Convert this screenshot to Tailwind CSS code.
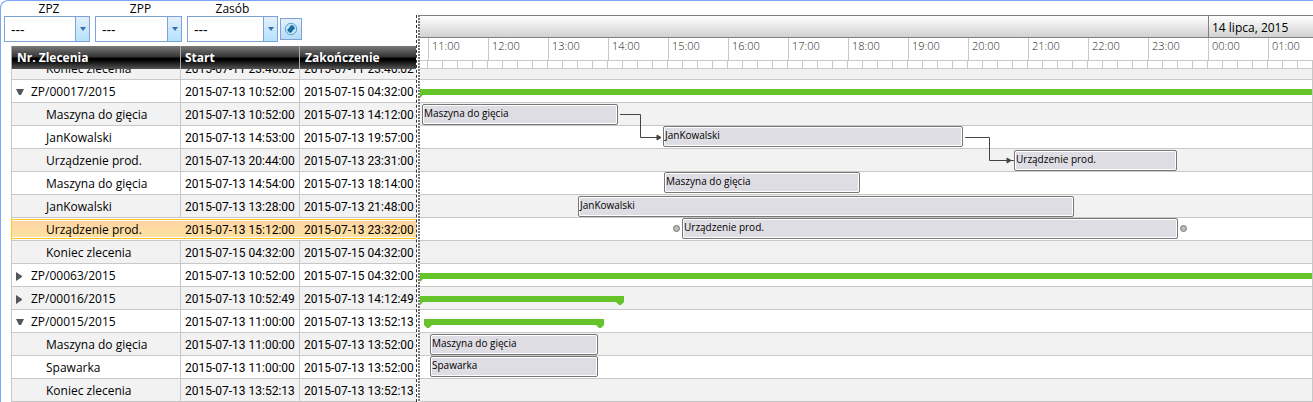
<!DOCTYPE html>
<html lang="pl">

<head>
  <meta charset="UTF-8" />
  <meta name="viewport" content="width=device-width, initial-scale=1" />
  <title>Harmonogram zleceń</title>
  <script src="https://cdn.jsdelivr.net/npm/@tailwindcss/browser@4"></script>
</head>

<body class="bg-white font-['Open_Sans',sans-serif] text-xs text-black">

  <main class="min-h-screen overflow-hidden rounded-tl-lg border-t border-l border-[#78a5f5] flex">

    <!-- Filters and order list -->
    <section class="w-[415px] shrink-0">
      <form class="flex h-[45px] pl-[3px] gap-[5px]">
        <div class="w-[86px]">
          <label for="zpz" class="block h-[15px] leading-4 text-center pl-1">ZPZ</label>
          <div class="relative">
            <select id="zpz" class="block w-full h-[26px] appearance-none border border-[#7da2d6] bg-white pl-1.5 pt-0.5 text-sm leading-5 outline-none">
              <option>---</option>
            </select>
            <span class="pointer-events-none absolute inset-y-px right-px w-3.5 border-l border-[#7da2d6] bg-linear-to-b from-[#e3effc] to-[#b5e2fb] flex items-center justify-center">
              <svg width="6" height="4" viewBox="0 0 6 4"><path d="M0 0h6L3 4z" fill="#3c6ca8" /></svg>
            </span>
          </div>
        </div>
        <div class="w-[87px]">
          <label for="zpp" class="block h-[15px] leading-4 text-center pl-1">ZPP</label>
          <div class="relative">
            <select id="zpp" class="block w-full h-[26px] appearance-none border border-[#7da2d6] bg-white pl-1.5 pt-0.5 text-sm leading-5 outline-none">
              <option>---</option>
            </select>
            <span class="pointer-events-none absolute inset-y-px right-px w-3.5 border-l border-[#7da2d6] bg-linear-to-b from-[#e3effc] to-[#b5e2fb] flex items-center justify-center">
              <svg width="6" height="4" viewBox="0 0 6 4"><path d="M0 0h6L3 4z" fill="#3c6ca8" /></svg>
            </span>
          </div>
        </div>
        <div class="w-[91px]">
          <label for="zasob" class="block h-[15px] leading-4 text-center">Zasób</label>
          <div class="relative">
            <select id="zasob" class="block w-full h-[26px] appearance-none border border-[#7da2d6] bg-white pl-1.5 pt-0.5 text-sm leading-5 outline-none">
              <option>---</option>
            </select>
            <span class="pointer-events-none absolute inset-y-px right-px w-3.5 border-l border-[#7da2d6] bg-linear-to-b from-[#e3effc] to-[#b5e2fb] flex items-center justify-center">
              <svg width="6" height="4" viewBox="0 0 6 4"><path d="M0 0h6L3 4z" fill="#3c6ca8" /></svg>
            </span>
          </div>
        </div>
        <button type="button" aria-label="Wyczyść filtry" class="-ml-[3px] mt-[17px] size-[22px] border border-[#7da2d6] bg-linear-to-b from-[#e3effc] to-[#b5dcfb] flex items-center justify-center">
          <svg width="14" height="14" viewBox="0 0 14 14">
            <circle cx="7" cy="7" r="5.7" fill="#c5e4f5" stroke="#5ba3cf" />
            <path d="M3 8 5.500 5.500 6 4 8 3 10 4.500 11 6.500 9 8 8 10 6 11z" fill="#1b6c9f" />
          </svg>
        </button>
      </form>

      <div class="pl-2.5">
        <table class="w-full table-fixed border-separate border-spacing-0">
          <colgroup>
            <col class="w-[170px]" />
            <col class="w-[119px]" />
            <col />
          </colgroup>
          <thead>
            <tr class="h-[23px] text-left text-white">
              <th class="border-x border-[#aaa] bg-[linear-gradient(#7a7a7a,#333_48%,#000_52%,#000_60%,#555)] p-0 pt-px pl-[5px] leading-4">Nr. Zlecenia</th>
              <th class="border-r border-[#aaa] bg-[linear-gradient(#7a7a7a,#333_48%,#000_52%,#000_60%,#555)] p-0 pt-px pl-1 leading-4">Start</th>
              <th class="bg-[linear-gradient(#7a7a7a,#333_48%,#000_52%,#000_60%,#555)] p-0 pt-px pl-[5px] leading-4">Zakończenie</th>
            </tr>
          </thead>
          <tbody id="orders"></tbody>
        </table>
      </div>
    </section>

    <!-- Splitter -->
    <div class="mt-3.5 w-1 shrink-0 border-l border-dashed border-[#333] flex justify-end">
      <div class="w-0.5 bg-[repeating-linear-gradient(#777_0_2px,#fff_2px_3px)]"></div>
    </div>

    <!-- Time chart -->
    <section class="mt-3.5 min-w-0 flex-1 overflow-hidden">
      <div class="flex h-[23px] border-y border-[#808080] bg-linear-to-b from-white to-[#d2d2d2]">
        <div class="w-[788px] shrink-0"></div>
        <div class="flex-1 border-l border-[#808080] pl-[3px] leading-6 whitespace-nowrap">14 lipca, 2015</div>
      </div>
      <div id="hours" class="flex h-[23px] overflow-hidden border-b border-[#c8c8c8] pl-2"></div>
      <div id="ticks" class="flex h-2 overflow-hidden border-r border-b border-[#c8c8c8] pl-[7px]"></div>
      <div class="relative border-r border-[#c8c8c8]">
        <div id="chart"></div>
        <svg class="pointer-events-none absolute top-0 left-0" width="620" height="110" fill="none" stroke="#444">
          <path d="M200 45.5h20.5v23H240" />
          <path d="M237 66l4 2.5-4 2.5z" fill="#444" />
          <path d="M545 68.5h24.5v23H594" />
          <path d="M587 89l4 2.5-4 2.5z" fill="#444" />
        </svg>
      </div>
    </section>
  </main>

  <script>
    // bar: task [left, width], sum: summary line [left, width]
    const rows = [
      { name: 'Koniec zlecenia', start: '2015-07-11 23:46:02', end: '2015-07-11 23:46:02', cut: true },
      { name: 'ZP/00017/2015', start: '2015-07-13 10:52:00', end: '2015-07-15 04:32:00', arrow: 'open', sum: [-5, 1000] },
      { name: 'Maszyna do gięcia', start: '2015-07-13 10:52:00', end: '2015-07-13 14:12:00', bar: [2, 196] },
      { name: 'JanKowalski', start: '2015-07-13 14:53:00', end: '2015-07-13 19:57:00', bar: [243, 300] },
      { name: 'Urządzenie prod.', start: '2015-07-13 20:44:00', end: '2015-07-13 23:31:00', bar: [594, 163] },
      { name: 'Maszyna do gięcia', start: '2015-07-13 14:54:00', end: '2015-07-13 18:14:00', bar: [244, 196] },
      { name: 'JanKowalski', start: '2015-07-13 13:28:00', end: '2015-07-13 21:48:00', bar: [158, 496] },
      { name: 'Urządzenie prod.', start: '2015-07-13 15:12:00', end: '2015-07-13 23:32:00', bar: [262, 496], selected: true },
      { name: 'Koniec zlecenia', start: '2015-07-15 04:32:00', end: '2015-07-15 04:32:00' },
      { name: 'ZP/00063/2015', start: '2015-07-13 10:52:00', end: '2015-07-15 04:32:00', arrow: 'closed', sum: [-5, 1000] },
      { name: 'ZP/00016/2015', start: '2015-07-13 10:52:49', end: '2015-07-13 14:12:49', arrow: 'closed', sum: [-5, 209] },
      { name: 'ZP/00015/2015', start: '2015-07-13 11:00:00', end: '2015-07-13 13:52:13', arrow: 'open', sum: [4, 180] },
      { name: 'Maszyna do gięcia', start: '2015-07-13 11:00:00', end: '2015-07-13 13:52:00', bar: [10, 168] },
      { name: 'Spawarka', start: '2015-07-13 11:00:00', end: '2015-07-13 13:52:00', bar: [10, 168] },
      { name: 'Koniec zlecenia', start: '2015-07-13 13:52:13', end: '2015-07-13 13:52:13' },
    ];

    const arrows = {
      open: '<svg class="ml-[3px] mr-1.5 shrink-0" width="10" height="7" viewBox="0 0 10 7"><path d="M1 0h8L6 6H4z" fill="#555" /></svg>',
      closed: '<svg class="ml-1 mr-[9px] shrink-0" width="6" height="9" viewBox="0 0 6 9"><path d="M0 0 6 4v1L0 9z" fill="#555" /></svg>',
    };

    const handle = '<span class="size-[7px] rounded-full border border-[#777] bg-[#bbb]"></span>';
    const notch = '<svg class="block" width="8" height="3" viewBox="0 0 8 3"><path d="M0 0h8L5 3H3z" fill="#66c42b" /></svg>';

    function orderRow(row, i) {
      const height = row.cut ? 'h-[11px]' : 'h-[23px]';
      const shade = i % 2 ? 'bg-white' : 'bg-[#f2f2f2]';
      const line = row.selected ? '' : 'border-r';
      const left = row.selected ? 'border-l border-l-[#ffc426]' : 'border-l';
      const pad = row.arrow ? '' : 'pl-[34px]';
      let inner = 'flex h-[22px] items-center pt-0.5 leading-4';
      if (row.cut) inner = 'flex h-2.5 items-end overflow-hidden pb-0.5 leading-4';
      if (row.selected) inner = 'my-px flex h-5 items-center border-y border-[#ffc426] bg-linear-to-b from-[#fdd3a5] to-[#fee3a0] pt-0.5 leading-4 shadow-[inset_0_1px_#fff,inset_0_-1px_#fff]';
      return `
        <tr class="${height} ${shade} whitespace-nowrap">
          <td class="border-b border-[#c8c8c8] ${left} ${line} p-0"><div class="${inner} ${pad}">${arrows[row.arrow] || ''}${row.name}</div></td>
          <td class="border-b ${line} border-[#c8c8c8] p-0 font-[Roboto,sans-serif]"><div class="${inner} pl-1">${row.start}</div></td>
          <td class="border-b border-[#c8c8c8] p-0 font-[Roboto,sans-serif]"><div class="${inner} pl-1">${row.end}</div></td>
        </tr>`;
    }

    function chartRow(row, i) {
      const height = row.cut ? 'h-[11px]' : 'h-[23px]';
      const shade = i % 2 ? 'bg-white' : 'bg-[#f2f2f2]';
      let item = '';
      if (row.bar) {
        const top = i % 2 ? 'top-0' : 'top-px';
        item = `<div class="absolute ${top} h-[21px] rounded-xs border border-[#777] bg-[#dedde4] pl-px text-[10px] leading-4 whitespace-nowrap shadow-[inset_0_0_0_1px_#fff]" style="left:${row.bar[0]}px;width:${row.bar[1]}px">${row.name}</div>`;
      }
      if (row.sum) {
        item = `<div class="absolute top-[9px]" style="left:${row.sum[0]}px;width:${row.sum[1]}px"><div class="h-1.5 bg-[#66c42b]"></div><div class="flex justify-between">${notch}${notch}</div></div>`;
      }
      if (row.selected) {
        item += `<div class="absolute top-[7px] flex justify-between" style="left:${row.bar[0] - 9}px;width:${row.bar[1] + 18}px">${handle}${handle}</div>`;
      }
      return `<div class="relative overflow-hidden border-b border-[#c8c8c8] ${height} ${shade}">${item}</div>`;
    }

    document.getElementById('orders').innerHTML = rows.map(orderRow).join('');
    document.getElementById('chart').innerHTML = rows.map(chartRow).join('');

    const hours = ['11', '12', '13', '14', '15', '16', '17', '18', '19', '20', '21', '22', '23', '00', '01'];
    document.getElementById('hours').innerHTML = hours
      .map((h) => `<div class="w-[60px] shrink-0 border-l border-[#c8c8c8] pl-[3px] text-[11px] font-light leading-4 text-[#222]">${h}:00</div>`)
      .join('');
    document.getElementById('ticks').innerHTML = '<div class="w-[15px] shrink-0 border-l border-[#c8c8c8]"></div>'.repeat(60);
  </script>

</body>

</html>
